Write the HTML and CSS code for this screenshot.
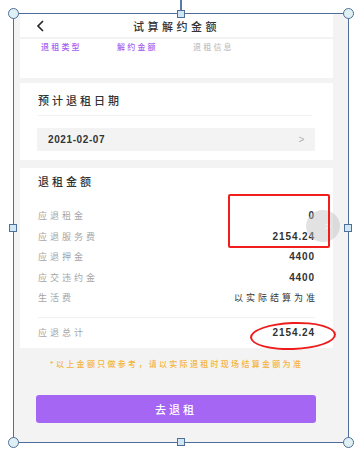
FILE: index.html
```html
<!DOCTYPE html>
<html lang="zh-CN">
<head>
  <meta charset="UTF-8" />
  <meta name="viewport" content="width=device-width, initial-scale=1.0" />
  <title>试算解约金额</title>
  <link rel="stylesheet" href="styles.css">
</head>
<body>
  <div class="stage">
    <div class="frame">
      <div class="screen">
        <div class="header">
          <svg class="back" width="9" height="12" viewBox="0 0 9 12"><path d="M7 1 L2 6 L7 11" fill="none" stroke="#222" stroke-width="1.6"/></svg>
          <div class="title">试算解约金额</div>
          <span></span>
        </div>

        <div class="steps">
          <span class="step active">退租类型</span>
          <span class="step active">解约金额</span>
          <span class="step">退租信息</span>
        </div>

        <div class="card date-card">
          <div class="card-title">预计退租日期</div>
          <div class="divider"></div>
          <div class="date-box">
            <span>2021-02-07</span>
            <span class="arrow">&gt;</span>
          </div>
        </div>

        <div class="card money-card">
          <div class="card-title">退租金额</div>
          <div class="rows">
            <div class="row"><span class="label">应退租金</span><span class="value">0</span></div>
            <div class="row"><span class="label">应退服务费</span><span class="value">2154.24</span></div>
            <div class="row"><span class="label">应退押金</span><span class="value">4400</span></div>
            <div class="row"><span class="label">应交违约金</span><span class="value">4400</span></div>
            <div class="row"><span class="label">生活费</span><span class="value cn">以实际结算为准</span></div>
          </div>
          <div class="divider"></div>
          <div class="row total"><span class="label">应退总计</span><span class="value">2154.24</span></div>
        </div>

        <p class="note">*以上金额只做参考，请以实际退租时现场结算金额为准</p>

        <button class="submit">去退租</button>
      </div>
    </div>

    <!-- annotations drawn over the screenshot -->
    <div class="scroll-dot">&gt;</div>
    <div class="mark-box"></div>
    <div class="mark-ring"></div>

    <!-- selection handles -->
    <div class="stem"></div>
    <div class="handle round tl"></div>
    <div class="handle round tr"></div>
    <div class="handle round bl"></div>
    <div class="handle round br"></div>
    <div class="handle square tm"></div>
    <div class="handle square bm"></div>
    <div class="handle square ml"></div>
    <div class="handle square mr"></div>
  </div>
</body>
</html>
```

FILE: styles.css
```css
* {
  box-sizing: border-box;
}

body {
  margin: 0;
  background: #fff;
  font-family: "Noto Sans CJK SC", "Noto Sans", sans-serif;
  color: #333;
  overflow: hidden;
}

.stage {
  position: relative;
  width: 354px;
  height: 449px;
  padding: 13px 0 0 13px;
}

.frame {
  width: 336px;
  height: 430px;
  border: 1px solid #4f6f9a;
  overflow: hidden;
}

.screen {
  height: 100%;
  background: #f3f3f3;
  padding-left: 6px;
}

.header {
  width: 313px;
  height: 23px;
  background: #fff;
  display: grid;
  grid-template-columns: 40px 1fr 40px;
  align-items: center;
}

.back {
  margin-left: 16px;
}

.title {
  text-align: center;
  font-size: 11px;
  font-weight: 500;
  letter-spacing: 3.5px;
  color: #333;
  line-height: 24px;
}

.steps {
  width: 313px;
  height: 39px;
  margin-top: 2px;
  background: #fff;
  display: flex;
  gap: 35px;
  padding: 2px 0 0 21px;
}

.step {
  width: 41px;
  font-size: 8px;
  font-weight: 500;
  letter-spacing: 2.2px;
  line-height: 12px;
  color: #c2c2c2;
  white-space: nowrap;
}

.step.active {
  color: #a560f2;
}

.card {
  width: 313px;
  background: #fff;
  padding: 0 21px 0 18px;
}

.card-title {
  font-size: 11px;
  font-weight: 500;
  letter-spacing: 3px;
  line-height: 20px;
  color: #333;
}

.divider {
  height: 1px;
  background: #f1f1f1;
}

.date-card {
  margin-top: 5px;
  padding-top: 7px;
  padding-bottom: 9px;
}

.date-card .divider {
  margin-top: 5px;
}

.date-box {
  margin: 12px -3px 0 -1px;
  height: 23px;
  background: #f3f3f3;
  display: flex;
  justify-content: space-between;
  align-items: center;
  padding: 0 10px 0 11px;
  font-family: "Liberation Sans", sans-serif;
  font-size: 10px;
  font-weight: bold;
  letter-spacing: 0.6px;
  color: #333;
}

.date-box .arrow {
  font-weight: normal;
  color: #b0b0b0;
  font-size: 10px;
}

.money-card {
  margin-top: 8px;
  padding-top: 3px;
  padding-right: 18px;
  padding-bottom: 5px;
}

.rows {
  margin-top: 14.7px;
}

.row {
  height: 20.5px;
  display: flex;
  justify-content: space-between;
  align-items: center;
}

.label {
  font-size: 9px;
  letter-spacing: 3px;
  color: #a6a6a6;
}

.value {
  font-family: "Liberation Sans", sans-serif;
  font-size: 10px;
  font-weight: bold;
  letter-spacing: 0.9px;
  color: #333;
}

.value.cn {
  font-family: "Noto Sans CJK SC", sans-serif;
  font-weight: normal;
  font-size: 9px;
  letter-spacing: 3px;
  margin-right: -3px;
}

.money-card .divider {
  margin-top: 8.5px;
}

.total {
  margin-top: 5px;
  height: 20px;
}

.note {
  width: 313px;
  margin: 10px 0 0;
  text-align: center;
  font-size: 8px;
  font-weight: 500;
  letter-spacing: 2.3px;
  line-height: 12px;
  color: #f4b33a;
  white-space: nowrap;
}

.submit {
  display: flex;
  justify-content: center;
  align-items: center;
  width: 280px;
  height: 28px;
  margin: 25px 0 0 16px;
  border: none;
  border-radius: 3px;
  background: #a567f3;
  color: #fff;
  font-family: "Noto Sans CJK SC", sans-serif;
  font-size: 11px;
  font-weight: 500;
  letter-spacing: 3px;
}

/* overlays */
.scroll-dot {
  position: absolute;
  left: 306px;
  top: 210px;
  width: 34px;
  height: 32px;
  border-radius: 50%;
  background: rgba(190, 190, 190, 0.45);
  color: rgba(255, 255, 255, 0.8);
  font-family: "Liberation Sans", sans-serif;
  font-size: 11px;
  display: flex;
  align-items: center;
  justify-content: center;
  padding-left: 10px;
}

.mark-box {
  position: absolute;
  left: 228px;
  top: 194px;
  width: 102px;
  height: 54px;
  border: 2.5px solid #f21d1d;
  border-radius: 2px;
}

.mark-ring {
  position: absolute;
  left: 250px;
  top: 322px;
  width: 86px;
  height: 28px;
  border: 2px solid #ee1c1c;
  border-radius: 50%;
  transform: rotate(-2deg);
}

.stem {
  position: absolute;
  left: 180px;
  top: 0;
  width: 2px;
  height: 11px;
  background: #5a7aa5;
}

.handle {
  position: absolute;
  border: 1px solid #4f6f9a;
}

.handle.round {
  width: 11px;
  height: 11px;
  border-radius: 50%;
  background: #dff0f4;
}

.handle.square {
  width: 8px;
  height: 8px;
  background: #cfe6f5;
}

.tl { left: 8px; top: 8px; }
.tr { left: 343px; top: 8px; }
.bl { left: 8px; top: 437px; }
.br { left: 343px; top: 437px; }
.tm { left: 177px; top: 10px; }
.bm { left: 177px; top: 438px; }
.ml { left: 9px; top: 224px; }
.mr { left: 344px; top: 224px; }
```
